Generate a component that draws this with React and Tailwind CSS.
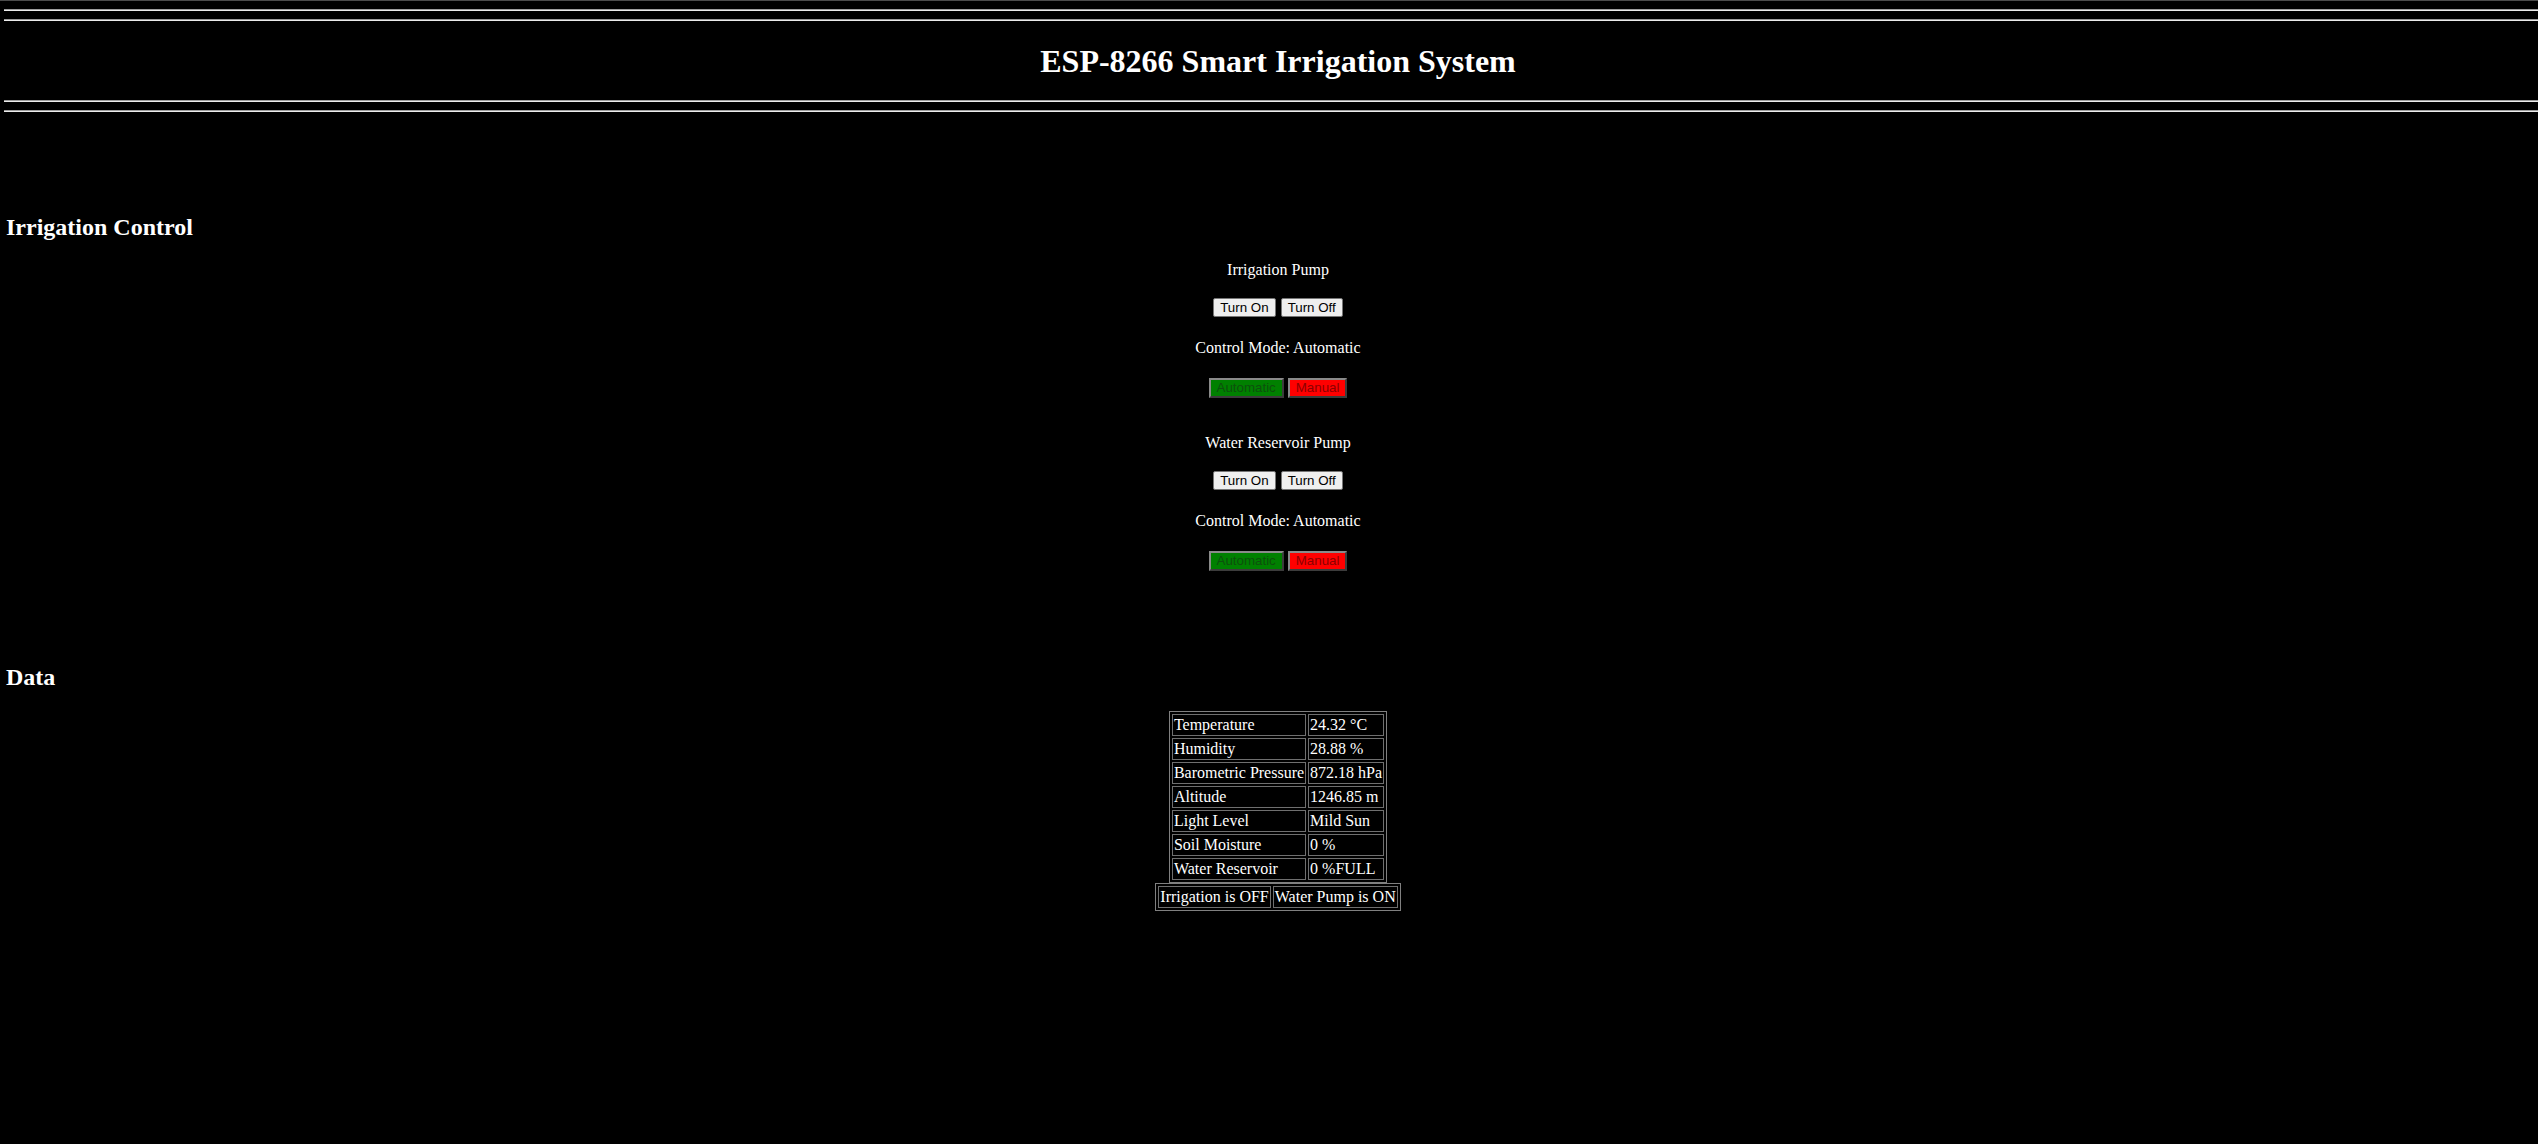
import React from 'react';

const sensorRows = [
  ['Temperature', '24.32 °C'],
  ['Humidity', '28.88 %'],
  ['Barometric Pressure', '872.18 hPa'],
  ['Altitude', '1246.85 m'],
  ['Light Level', 'Mild Sun'],
  ['Soil Moisture', '0 %'],
  ['Water Reservoir', '0 %FULL'],
];

const Rule = ({ className = '' }) => (
  <div className={`h-[2px] border-t border-b border-t-[#9c9c9c] border-b-[#ececec] ${className}`} />
);

const PlainButton = ({ children }) => (
  <button className="bg-[#efefef] text-black border border-[#767676] rounded-[2px] px-[6px] py-px text-[13.33px] leading-[15px] font-['Liberation_Sans',Arial,sans-serif]">
    {children}
  </button>
);

const ModeButton = ({ children, tone }) => (
  <button
    className={`${
      tone === 'green' ? 'bg-[#008000] text-[#0d500d]' : 'bg-[#ff0000] text-[#8c0000]'
    } border-2 border-t-[#8a8a8a] border-l-[#8a8a8a] border-b-[#3c3c3c] border-r-[#3c3c3c] px-[6px] py-px text-[13.33px] leading-[14px] font-['Liberation_Sans',Arial,sans-serif]`}
  >
    {children}
  </button>
);

const PumpControl = ({ title, first }) => (
  <div className={`flex flex-col items-center ${first ? 'mt-[20px]' : 'mt-[36px]'}`}>
    <p className="text-[16px] leading-[18px]">{title}</p>
    <div className="mt-[19px] flex gap-[5px]">
      <PlainButton>Turn On</PlainButton>
      <PlainButton>Turn Off</PlainButton>
    </div>
    <p className="mt-[22px] text-[16px] leading-[18px]">Control Mode: Automatic</p>
    <div className="mt-[21px] flex gap-[4px]">
      <ModeButton tone="green">Automatic</ModeButton>
      <ModeButton tone="red">Manual</ModeButton>
    </div>
  </div>
);

export default function App() {
  return (
    <div className="min-h-screen w-full overflow-hidden bg-black text-white border-t border-[#4b4b4b] font-['Liberation_Serif','Times_New_Roman',serif]">
      <div className="w-[2548px] ml-[4px] pb-10">
        <Rule className="mt-[8px]" />
        <Rule className="mt-[8px]" />
        <h1 className="mt-[22px] text-center text-[32px] leading-[37px] font-bold">
          ESP-8266 Smart Irrigation System
        </h1>
        <Rule className="mt-[20px]" />
        <Rule className="mt-[8px]" />

        <h2 className="mt-[101px] ml-[2px] text-[24px] leading-[28px] font-bold">Irrigation Control</h2>
        <PumpControl title="Irrigation Pump" first />
        <PumpControl title="Water Reservoir Pump" />

        <h2 className="mt-[92px] ml-[2px] text-[24px] leading-[28px] font-bold">Data</h2>
        <div className="mt-[20px] flex flex-col items-center">
          <table className="border-separate border-spacing-[2px] border border-[#808080] text-[16px] leading-[18px]">
            <tbody>
              {sensorRows.map(([label, value]) => (
                <tr key={label}>
                  <td className="border border-[#6f6f6f] p-px text-left">{label}</td>
                  <td className="border border-[#6f6f6f] p-px text-left">{value}</td>
                </tr>
              ))}
            </tbody>
          </table>
          <table className="border-separate border-spacing-[2px] border border-[#808080] text-[16px] leading-[18px]">
            <tbody>
              <tr>
                <td className="border border-[#6f6f6f] p-px">Irrigation is OFF</td>
                <td className="border border-[#6f6f6f] p-px">Water Pump is ON</td>
              </tr>
            </tbody>
          </table>
        </div>
      </div>
    </div>
  );
}
